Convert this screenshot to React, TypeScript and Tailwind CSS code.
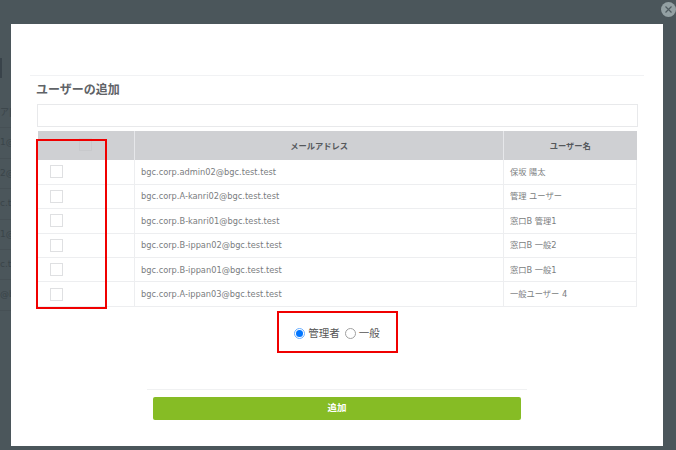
import React from 'react';

const users = [
  { email: 'bgc.corp.admin02@bgc.test.test', name: '保坂 陽太' },
  { email: 'bgc.corp.A-kanri02@bgc.test.test', name: '管理 ユーザー' },
  { email: 'bgc.corp.B-kanri01@bgc.test.test', name: '窓口B 管理1' },
  { email: 'bgc.corp.B-ippan02@bgc.test.test', name: '窓口B 一般2' },
  { email: 'bgc.corp.B-ippan01@bgc.test.test', name: '窓口B 一般1' },
  { email: 'bgc.corp.A-ippan03@bgc.test.test', name: '一般ユーザー 4' },
];

const behind = ['ア|', '1@', '2@', 'c.te', '1@', 'c.t', '@b'];

const font = { fontFamily: '"DejaVu Sans", "Noto Sans CJK JP", sans-serif' };

export default function App() {
  return (
    <div className="relative h-[450px] w-[676px] overflow-hidden bg-[#4b565b]" style={font}>
      {/* page dimmed behind the modal */}
      <div className="absolute left-0 top-[58px] h-5 w-[2px] bg-[#39434a]" />
      <div className="absolute left-0 top-[98px] w-[11px] text-[9px] text-[#3a4449]">
        {behind.map((t, i) => (
          <div key={i} className="h-[30.4px] overflow-hidden whitespace-nowrap border-b border-[#465055] pt-2">
            {t}
          </div>
        ))}
      </div>

      <button className="absolute left-[661px] top-[2px] flex h-[15px] w-[15px] items-center justify-center rounded-full bg-[#93a0a3] text-[#4f5b60]">
        <svg width="9" height="9" viewBox="0 0 9 9" fill="none" stroke="currentColor" strokeWidth="1.2">
          <path d="M1.5 1.5l6 6M7.5 1.5l-6 6" />
        </svg>
      </button>

      <div className="absolute left-[11px] top-[24px] flex h-[422px] w-[652px] flex-col bg-white">
        <div className="mx-[19px] mt-[51px] h-px bg-[#f1f2f4]" />
        <h2 className="ml-[25px] mt-[6px] h-[16px] text-[12px] font-bold leading-[16px] text-[#606367]">ユーザーの追加</h2>
        <input className="ml-[26px] mt-[6px] h-[23px] w-[601px] shrink-0 border border-[#e8e9eb] bg-white" />

        <table className="ml-[26px] mt-[4px] w-[600px] table-fixed border-collapse text-[8.25px] text-[#7a7d80]">
          <thead>
            <tr className="h-[29px] bg-[#cfd0d3] text-[8.25px] font-bold text-[#55585c]">
              <th className="w-[97px] border-r border-[#e6e7ea]">
                <div className="mx-auto mb-[3px] h-[13px] w-[13px] border border-[#c8c9cc]" />
              </th>
              <th className="border-r border-[#e6e7ea] pt-[2px] font-bold">メールアドレス</th>
              <th className="w-[133px] pt-[2px] font-bold">ユーザー名</th>
            </tr>
          </thead>
          <tbody>
            {users.map((u) => (
              <tr key={u.email} className="h-[24.4px] border-b border-[#edeef0]">
                <td className="border-l border-r border-[#edeef0] pl-[12px]">
                  <div className="h-[13px] w-[13px] border border-[#dfe0e2] bg-white" />
                </td>
                <td className="border-r border-[#edeef0] pl-[6px]">{u.email}</td>
                <td className="border-r border-[#edeef0] pl-[6px]">{u.name}</td>
              </tr>
            ))}
          </tbody>
        </table>

        <div className="mt-[19px] flex items-center justify-center text-[10.5px] text-[#555]">
          <span className="mr-[3px] flex h-[11px] w-[11px] items-center justify-center rounded-full border border-[#6aaeff] bg-white">
            <span className="h-[7px] w-[7px] rounded-full bg-[#0075ff]" />
          </span>
          <span className="mr-[5px]">管理者</span>
          <span className="mr-[3px] h-[11px] w-[11px] rounded-full border border-[#a0a0a0] bg-white" />
          <span>一般</span>
        </div>

        <div className="ml-[136px] mt-[47px] h-px w-[380px] bg-[#f0f1f2]" />
        <button className="ml-[142px] mt-[7px] h-[23px] w-[368px] shrink-0 rounded-[2px] bg-[#86bc25] text-[9.5px] font-bold text-white">
          追加
        </button>
      </div>

      {/* red annotation boxes */}
      <div className="absolute left-[36px] top-[139px] h-[170px] w-[71px] border-[2px] border-[#f00000]" />
      <div className="absolute left-[277px] top-[311px] h-[42px] w-[121px] border-[2px] border-[#f00000]" />
    </div>
  );
}
